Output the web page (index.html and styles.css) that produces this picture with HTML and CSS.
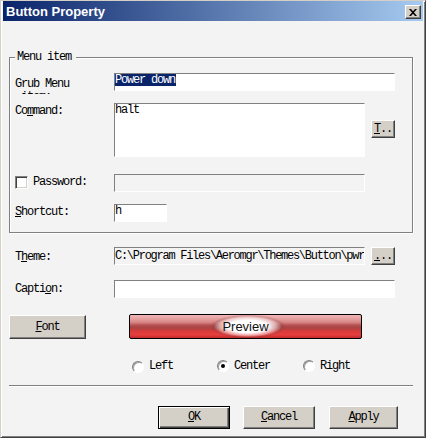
FILE: index.html
```html
<!DOCTYPE html>
<html>
<head>
<meta charset="utf-8">
<title>Button Property</title>
<link rel="stylesheet" href="styles.css">
</head>
<body>
<div class="window">
  <div class="titlebar">
    <span class="title">Button Property</span>
    <span class="close"><svg width="8" height="7" viewBox="0 0 8 7"><path d="M0 0h2l2 2.3 2-2.3h2L5 3.5 8 7H6L4 4.7 2 7H0l3-3.5z" fill="#000"/></svg></span>
  </div>
  <div class="client">
    <div class="group">
      <span class="legend">Menu item</span>
      <div class="row row-grub">
        <div class="label label-grub">Grub Menu
 item:</div>
        <div class="field w-full h18"><span class="sel">Power down</span></div>
      </div>
      <div class="row row-cmd">
        <div class="label off2">Co<u>m</u>mand:</div>
        <div class="field w-mid area">halt</div>
        <div class="btn btn-side btn-t"><u>T</u>..</div>
      </div>
      <div class="row row-pw">
        <div class="label off2 check-label"><span class="check"></span>Password:</div>
        <div class="field w-mid h18 disabled"></div>
      </div>
      <div class="row row-sc">
        <div class="label off2"><u>S</u>hortcut:</div>
        <div class="field w-short h18">h</div>
      </div>
    </div>

    <div class="row outer row-theme">
      <div class="label off4">T<u>h</u>eme:</div>
      <div class="field w-mid h18 disabled path">C:\Program Files\Aeromgr\Themes\Button\pwr</div>
      <div class="btn btn-side"><u>.</u>..</div>
    </div>

    <div class="row outer row-caption">
      <div class="label off3">Capti<u>o</u>n:</div>
      <div class="field w-full h18"></div>
    </div>

    <div class="row row-font">
      <div class="btn btn-font"><u>F</u>ont</div>
      <div class="preview"><span class="preview-text">Preview</span></div>
    </div>

    <div class="radios">
      <div class="radio-item radio-left"><span class="radio"></span>Left</div>
      <div class="radio-item"><span class="radio on"></span>Center</div>
      <div class="radio-item"><span class="radio"></span>Right</div>
    </div>

    <div class="separator"></div>

    <div class="actions">
      <div class="btn btn-action btn-default"><u>O</u>K</div>
      <div class="btn btn-action btn-cancel"><u>C</u>ancel</div>
      <div class="btn btn-action btn-apply"><u>A</u>pply</div>
    </div>
  </div>
</div>
</body>
</html>
```

FILE: styles.css
```css
* { box-sizing: border-box; }
html, body { margin: 0; padding: 0; }
body { width: 426px; height: 438px; overflow: hidden; background: #f3f3f3; }

.window {
  width: 426px;
  height: 438px;
  background: #f3f3f3;
  border: 1px solid;
  border-color: #d4d0c8 #404040 #404040 #d4d0c8;
  box-shadow: inset 1px 1px 0 #fff, inset -1px -1px 0 #808080;
  padding: 0 2px 2px 2px;
  font-family: "Liberation Mono", "DejaVu Sans Mono", monospace;
  font-size: 12px;
  letter-spacing: -1.2px;
  line-height: 13px;
  color: #000;
}

.titlebar {
  height: 20px;
  display: flex;
  align-items: center;
  justify-content: space-between;
  padding: 0 2px 0 3px;
  background: linear-gradient(to right, #0a246a, #a6caf0);
}
.title {
  font-family: "Liberation Sans", Arial, sans-serif;
  font-weight: 700;
  font-size: 13px;
  letter-spacing: 0;
  line-height: 20px;
  padding-top: 1px;
  color: #fff;
}
.close {
  width: 16px;
  height: 14px;
  margin-top: 2px;
  display: flex;
  align-items: center;
  justify-content: center;
  background: #d4d0c8;
  border: 1px solid;
  border-color: #fff #404040 #404040 #fff;
  box-shadow: inset -1px -1px 0 #808080;
}

.client { padding: 36px 0 0 6px; }

.group {
  position: relative;
  width: 404px;
  border: 1px solid #808080;
  box-shadow: 1px 1px 0 #fff, inset 1px 1px 0 #fff;
  padding: 15px 0 10px 5px;
}
.legend {
  position: absolute;
  top: -7px;
  left: 5px;
  padding: 0 5px 0 2px;
  background: #f3f3f3;
}

.row { display: flex; align-items: flex-start; }
.row.outer { padding-left: 6px; }
.row-grub { height: 18px; }
.label { width: 99px; flex-shrink: 0; white-space: pre; }
.label-grub { margin-top: 5px; height: 16px; overflow: hidden; }
.off2 { margin-top: 2px; }
.off3 { margin-top: 3px; }
.off4 { margin-top: 4px; }

.field {
  background: #fff;
  border: 1px solid;
  border-color: #808080 #fff #fff #808080;
  padding: 0;
  white-space: nowrap;
  overflow: hidden;
}
.field.disabled { background: #f3f3f3; }
.h18 { height: 18px; }
.w-full { width: 281px; }
.w-mid { width: 251px; }
.w-short { width: 53px; }
.area { height: 54px; }
.path { padding-top: 2px; letter-spacing: -1.27px; }

.sel {
  display: inline-block;
  height: 12px;
  line-height: 12px;
  background: #0a246a;
  color: #fff;
  padding-right: 1px;
}

.row-cmd { margin-top: 12px; }
.row-pw { margin-top: 17px; }
.row-sc { margin-top: 12px; }
.row-theme { margin-top: 14px; }
.row-caption { margin-top: 15px; }

.check-label { display: flex; align-items: flex-start; }
.check {
  width: 13px;
  height: 13px;
  margin-right: 5px;
  background: #fff;
  border: 1px solid;
  border-color: #808080 #fff #fff #808080;
  box-shadow: inset 1px 1px 0 #404040, inset -1px -1px 0 #d4d0c8;
}

.btn {
  display: flex;
  align-items: center;
  justify-content: center;
  background: #d4d0c8;
  border: 1px solid;
  border-color: #fff #404040 #404040 #fff;
  box-shadow: inset -1px -1px 0 #808080;
  flex-shrink: 0;
}
.btn-side { width: 24px; height: 18px; margin-left: 6px; }
.btn-t { margin-top: 17px; }

.row-font { margin-top: 16px; height: 25px; }
.btn-font { width: 77px; height: 24px; margin-top: 1px; }

.preview {
  width: 233px;
  height: 25px;
  margin-left: 43px;
  border: 1px solid #000;
  border-radius: 2px;
  display: flex;
  align-items: center;
  justify-content: center;
  background:
    radial-gradient(ellipse 38px 12px at 51% 50%, #ffffff 0%, #ffffff 52%, rgba(255,255,255,0.5) 74%, rgba(120,60,60,0.25) 90%, rgba(255,255,255,0) 100%),
    linear-gradient(to bottom, #f0b6b6 0%, #e6a0a0 16%, #d68484 32%, #b44c4c 46%, #a84444 56%, #d83a3a 70%, #e83e3e 86%, #c02a2a 100%);
}
.preview-text {
  font-family: "Liberation Sans", Arial, sans-serif;
  font-size: 13px;
  letter-spacing: 0;
  color: #111;
}

.radios {
  display: grid;
  grid-template-columns: 85px 86px auto;
  padding-left: 123px;
  margin-top: 20px;
  height: 13px;
}
.radio-item { display: flex; align-items: center; gap: 5px; }
.radio-left { margin-top: 1px; }
.radio {
  width: 12px;
  height: 12px;
  border-radius: 50%;
  background: #fff;
  border: 1px solid;
  border-color: #808080 #fff #fff #808080;
  box-shadow: inset 1px 1px 0 #a0a0a0;
  display: grid;
  place-items: center;
}
.radio.on::after {
  content: "";
  width: 4px;
  height: 4px;
  border-radius: 50%;
  background: #000;
}

.separator {
  width: 404px;
  height: 2px;
  margin-top: 13px;
  border-top: 1px solid #808080;
  border-bottom: 1px solid #fff;
}

.actions { display: flex; margin-top: 19px; padding-left: 149px; }
.btn-action { height: 23px; width: 72px; }
.btn-default {
  border: 1px solid #000;
  box-shadow: inset 1px 1px 0 #fff, inset -1px -1px 0 #404040, inset -2px -2px 0 #808080;
}
.btn-cancel { margin-left: 13px; }
.btn-apply { margin-left: 14px; width: 69px; }
```
